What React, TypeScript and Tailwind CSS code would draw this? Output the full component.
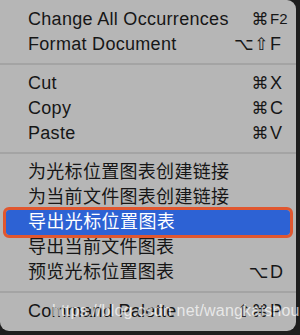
import React from "react";

type Item = {
  label: string;
  mods?: string;
  keyName?: string;
  small?: boolean;
  active?: boolean;
};

const font = {
  fontFamily:
    '"Liberation Sans", "Noto Sans CJK SC", "DejaVu Sans", sans-serif',
};

const groups: Item[][] = [
  [
    { label: "Change All Occurrences", mods: "⌘", keyName: "F2", small: true },
    { label: "Format Document", mods: "⌥⇧", keyName: "F" },
  ],
  [
    { label: "Cut", mods: "⌘", keyName: "X" },
    { label: "Copy", mods: "⌘", keyName: "C" },
    { label: "Paste", mods: "⌘", keyName: "V" },
  ],
  [
    { label: "为光标位置图表创建链接" },
    { label: "为当前文件图表创建链接" },
    { label: "导出光标位置图表", active: true },
    { label: "导出当前文件图表" },
    { label: "预览光标位置图表", mods: "⌥", keyName: "D" },
  ],
  [{ label: "Command Palette", mods: "⇧⌘", keyName: "P" }],
];

const Shortcut = ({ mods, keyName, small }: Item) => (
  <div className="flex items-center ml-auto mr-[9px]">
    <span
      className="text-[17px] tracking-[0.5px]"
      style={{ fontFamily: '"DejaVu Sans", sans-serif' }}
    >
      {mods}
    </span>
    <span className={`w-[18px] pl-[1px] ${small ? "text-[15px]" : "text-[18px]"}`}>
      {keyName}
    </span>
  </div>
);

const Row = (item: Item) => {
  if (item.active) {
    return (
      <div className="relative mx-[6px] h-[25px] flex items-center bg-[#2d62d4] text-white pl-[22px] rounded-[3px]">
        <span className="text-[18px] tracking-[0.4px]">{item.label}</span>
        <div className="absolute -inset-[3px] border-[3px] border-[#e1572f] rounded-[6px]" />
      </div>
    );
  }
  return (
    <div className="h-[25px] flex items-center pl-[28px] text-[#161616]">
      <span className="text-[18px] tracking-[0.3px] whitespace-nowrap">{item.label}</span>
      {item.keyName && <Shortcut {...item} />}
    </div>
  );
};

export default function App() {
  return (
    <div className="w-[300px] h-[335px] bg-[#1e1e1e] overflow-hidden" style={font}>
      <div className="relative w-[296px] h-[331px] bg-[#b6b6b6] rounded-tr-[9px] rounded-b-[9px] pt-[7px]">
        {groups.map((group, gi) => (
          <div key={gi}>
            {gi > 0 && (
              <div className="h-[14px] flex items-center">
                <div className="w-full h-[2px] bg-[#a4a4a4]" />
              </div>
            )}
            {group.map((item) => (
              <Row key={item.label} {...item} />
            ))}
          </div>
        ))}
        <span className="absolute left-[52px] bottom-[8px] text-[16px] text-white/70 tracking-[0.2px] whitespace-nowrap pointer-events-none">
          https://blog.csdn.net/wangkaishou
        </span>
      </div>
    </div>
  );
}
